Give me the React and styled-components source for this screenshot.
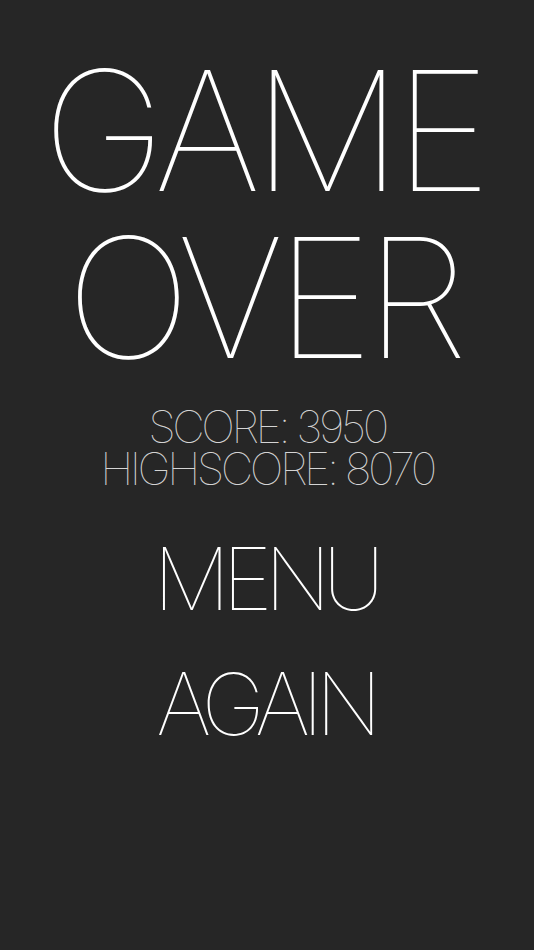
import React from 'react';
import styled, { createGlobalStyle } from 'styled-components';

const Global = createGlobalStyle`
  html, body {
    margin: 0;
    padding: 0;
    background: #262626;
  }
  body {
    font-family: Inter, "Liberation Sans", sans-serif;
  }
`;

const Screen = styled.div`
  width: 534px;
  height: 950px;
  background: #262626;
  display: flex;
  flex-direction: column;
  align-items: center;
  padding-top: 47px;
  box-sizing: border-box;
  overflow: hidden;
`;

const Title = styled.h1`
  margin: 0;
  padding-right: 8px;
  font-weight: 100;
  font-size: 167px;
  line-height: 167px;
  letter-spacing: -8px;
  color: #ffffff;
  text-align: center;
`;

const Scores = styled.div`
  margin-top: 25px;
  display: flex;
  flex-direction: column;
  align-items: center;
  color: #d4d4d4;
  font-weight: 100;
  font-size: 45px;
  line-height: 42px;
  letter-spacing: -3.5px;
`;

const Button = styled.button`
  background: none;
  border: none;
  padding: 0 4px 0 0;
  margin-top: ${p => p.$gap}px;
  font-family: inherit;
  font-weight: 100;
  font-size: 86px;
  line-height: 90px;
  letter-spacing: -8px;
  color: #ffffff;
  cursor: pointer;
`;

export default function App() {
  return (
    <>
      <Global />
      <Screen>
        <Title>GAME</Title>
        <Title>OVER</Title>
        <Scores>
          <span>SCORE: 3950</span>
          <span>HIGHSCORE: 8070</span>
        </Scores>
        <Button $gap={44}>MENU</Button>
        <Button $gap={35}>AGAIN</Button>
      </Screen>
    </>
  );
}
